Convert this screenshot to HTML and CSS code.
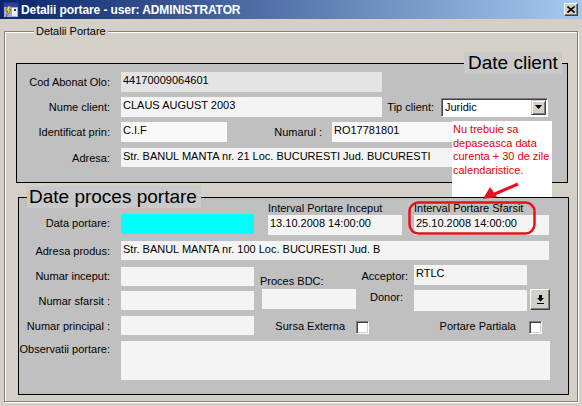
FILE: index.html
```html
<!DOCTYPE html>
<html>

<head>
    <meta charset="UTF-8">
    <title>Detalii portare</title>
    <link rel="stylesheet" href="styles.css">
</head>

<body>
    <div class="titleBar">
        <svg class="appIcon" width="16" height="16" viewBox="0 0 16 16">
            <rect x="0.5" y="0.5" width="15" height="15" fill="#9FA8E0" stroke="#1C2C80"/>
            <rect x="1" y="1" width="14" height="4" fill="#2A3FA8"/>
            <rect x="9" y="6" width="5" height="8" fill="#F0F0F0"/>
            <path d="M11 7h2v2h-2z" fill="#303060"/>
            <path d="M5 4l-2 5h2l-2 6 5-7H6l2-4z" fill="#F8E020" stroke="#705000" stroke-width="0.6"/>
        </svg>
        <span class="titleText">Detalii portare - user: ADMINISTRATOR</span>
        <span class="closeBtn">
            <svg width="8" height="7" viewBox="0 0 8 7">
                <path d="M0.5 0.5L7.5 6.5M7.5 0.5L0.5 6.5" stroke="#000" stroke-width="1.6"/>
            </svg>
        </span>
    </div>

    <div class="groupBox">
        <span class="groupTitle">Detalii Portare</span>

        <!--date client-->
        <div class="panel panelClient">
            <span class="panelTitle titleClient">Date client</span>
            <div class="row">
                <span class="lbl">Cod Abonat Olo:</span>
                <div class="field fieldDim w261">44170009064601</div>
            </div>
            <div class="row">
                <span class="lbl">Nume client:</span>
                <div class="field w261">CLAUS AUGUST 2003</div>
                <span class="lblTip">Tip client:</span>
                <div class="combo">
                    <span class="comboTxt">Juridic</span>
                    <span class="comboBtn">
                        <svg width="7" height="4" viewBox="0 0 7 4"><path d="M0 0h7L3.5 4z" fill="#000"/></svg>
                    </span>
                </div>
            </div>
            <div class="row">
                <span class="lbl">Identificat prin:</span>
                <div class="field fieldWhite w106">C.I.F</div>
                <span class="lblNr">Numarul :</span>
                <div class="field fieldWhite w217">RO17781801</div>
            </div>
            <div class="row rowAddr">
                <span class="lbl">Adresa:</span>
                <div class="field w428">Str. BANUL MANTA nr. 21 Loc. BUCURESTI Jud. BUCURESTI</div>
            </div>
        </div>

        <!--date proces portare-->
        <div class="panel panelProces">
            <span class="panelTitle titleProces">Date proces portare</span>
            <div class="procGrid">
                <span class="gl lData">Data portare:</span>
                <div class="field fData"></div>
                <div class="inc">
                    <span class="cap">Interval Portare Inceput</span>
                    <div class="field">13.10.2008 14:00:00</div>
                </div>
                <div class="out">
                    <span class="cap">Interval Portare Sfarsit</span>
                    <div class="field">25.10.2008 14:00:00</div>
                </div>

                <span class="gl lAdr">Adresa produs:</span>
                <div class="field adr">Str. BANUL MANTA nr. 100 Loc. BUCURESTI Jud. B</div>

                <span class="gl lInc">Numar inceput:</span>
                <div class="field num nInc"></div>
                <span class="lBdc">Proces BDC:</span>
                <span class="lAcc">Acceptor:</span>
                <div class="field acc">RTLC</div>

                <span class="gl lSf">Numar sfarsit :</span>
                <div class="field num nSf"></div>
                <div class="field bdc"></div>
                <span class="lDon">Donor:</span>
                <div class="field don"></div>
                <span class="btn btnDon">
                    <svg width="7" height="9" viewBox="0 0 7 9"><path d="M2 0h3v3h2L3.5 6.5 0 3h2z" fill="#000"/><rect x="0" y="8" width="7" height="1" fill="#000"/></svg>
                </span>

                <span class="gl lPr">Numar principal :</span>
                <div class="field num nPr"></div>
                <span class="lSur">Sursa Externa</span>
                <span class="chk cSur"></span>
                <span class="lPar">Portare Partiala</span>
                <span class="chk cPar"></span>

                <span class="gl lObs">Observatii portare:</span>
                <div class="field obs"></div>
            </div>
        </div>
    </div>

    <!--nota-->
    <div class="note">Nu trebuie sa<br/>depaseasca data<br/>curenta + 30 de zile<br/>calendaristice.</div>
    <svg class="marks" width="582" height="406" viewBox="0 0 582 406">
        <rect x="409.5" y="202.5" width="125" height="31" rx="9" fill="none" stroke="#E8101A" stroke-width="2.5"/>
        <line x1="518" y1="184" x2="490" y2="196" stroke="#E8101A" stroke-width="3"/>
        <polygon points="483,199 497,197 490,187" fill="#E8101A"/>
    </svg>
</body>

</html>
```

FILE: styles.css
```css
body {
    margin: 0;
    width: 582px;
    height: 406px;
    overflow: hidden;
    position: relative;
    background-color: #D4D0C8;
    font-family: "Liberation Sans", Arial, sans-serif;
    font-size: 11px;
    color: #000;
}

/* title bar */
.titleBar {
    display: flex;
    align-items: center;
    height: 19px;
    background: linear-gradient(to right, #0A246A, #A6CAF0);
}

.appIcon {
    flex: none;
    margin-left: 3px;
}

.titleText {
    margin-left: 2px;
    color: #FFF;
    font-weight: bold;
    font-size: 12px;
    letter-spacing: -0.1px;
    white-space: nowrap;
}

.closeBtn {
    display: flex;
    align-items: center;
    justify-content: center;
    box-sizing: border-box;
    width: 14px;
    height: 13px;
    margin-left: auto;
    margin-right: 4px;
    background-color: #D4D0C8;
    border: 1px solid;
    border-color: #FFF #404040 #404040 #FFF;
    box-shadow: inset -1px -1px 0 #808080;
}

/* outer frame */
.groupBox {
    position: relative;
    box-sizing: border-box;
    width: 574px;
    height: 371px;
    margin: 12px 0 0 4px;
    padding: 31px 0 0 11px;
    border: 1px solid #808080;
    box-shadow: 1px 1px 0 #FFF, inset 1px 1px 0 #FFF;
}

.groupTitle {
    position: absolute;
    left: 29px;
    top: -8px;
    padding: 0 2px;
    line-height: 14px;
    background-color: #D4D0C8;
}

.panel {
    position: relative;
    box-sizing: border-box;
    border: 1px solid #000;
    background-color: #C0C0C0;
}

.panelClient {
    width: 552px;
    height: 120px;
    padding-top: 8px;
}

.panelProces {
    width: 551px;
    height: 198px;
    margin: 14px 0 0 2px;
}

.panelTitle {
    position: absolute;
    top: -12px;
    font-size: 19px;
    line-height: 22px;
    white-space: nowrap;
    background-color: #C9C9C9;
}

.titleClient {
    left: 447px;
    padding: 0 4px;
}

.titleProces {
    left: 8px;
    padding: 0 4px 0 2px;
}

/* fields */
.field {
    box-sizing: border-box;
    height: 20px;
    padding: 1px 2px 0;
    line-height: 14px;
    background-color: #F4F4F4;
    white-space: nowrap;
    overflow: hidden;
}

.fieldDim {
    background-color: #E4E4E4;
}

.fieldWhite {
    background-color: #F8F8F8;
}

.w261 { width: 261px; }
.w106 { width: 106px; }
.w217 { width: 217px; }
.w428 { width: 428px; height: 19px; }

/* date client rows */
.row {
    display: flex;
    align-items: center;
    height: 20px;
}

.row + .row {
    margin-top: 5px;
}

.row + .rowAddr {
    height: 19px;
    margin-top: 6px;
}

.lbl {
    box-sizing: border-box;
    width: 94px;
    margin-right: 10px;
    padding-right: 1px;
    text-align: right;
    white-space: nowrap;
    line-height: 14px;
}

.lblTip {
    width: 52px;
    text-align: right;
    white-space: nowrap;
}

.lblNr {
    box-sizing: border-box;
    width: 105px;
    padding-right: 10px;
    text-align: right;
    white-space: nowrap;
}

.combo {
    display: flex;
    align-items: center;
    box-sizing: border-box;
    width: 107px;
    height: 19px;
    margin-left: 7px;
    padding: 1px 1px 1px 2px;
    background-color: #FFF;
    border: 1px solid;
    border-color: #808080 #FFF #FFF #808080;
    box-shadow: inset 1px 1px 0 #404040;
}

.comboTxt {
    flex: 1;
    padding-left: 1px;
}

.comboBtn {
    display: flex;
    align-items: center;
    justify-content: center;
    box-sizing: border-box;
    width: 15px;
    height: 15px;
    background-color: #D4D0C8;
    border: 1px solid;
    border-color: #D4D0C8 #404040 #404040 #D4D0C8;
    box-shadow: inset 1px 1px 0 #FFF, inset -1px -1px 0 #808080;
}

/* date proces portare */
.procGrid {
    display: grid;
    grid-template-columns: 102px 141px 94px 58px 116px 20px;
    grid-template-rows: 35px 27px 24px 25px 25px 42px;
    grid-template-areas:
        "lData fData inc  inc  out  out"
        "lAdr  adr   adr  adr  adr  adr"
        "lInc  nInc  lBdc lAcc acc  ."
        "lSf   nSf   bdc  lDon don  btnDon"
        "lPr   nPr   lSur cSur lPar cPar"
        "lObs  obs   obs  obs  obs  obs";
    padding-top: 4px;
}

.gl {
    align-self: center;
    padding-right: 11px;
    text-align: right;
    line-height: 14px;
    white-space: nowrap;
}

.lData {
    grid-area: lData;
    align-self: start;
    margin-top: 14px;
}

.fData {
    grid-area: fData;
    align-self: start;
    width: 133px;
    margin-top: 12px;
    background-color: #00FFFF;
}

.inc {
    grid-area: inc;
    width: 134px;
    margin-left: 6px;
}

.out {
    grid-area: out;
    width: 135px;
}

.cap {
    display: block;
    line-height: 13px;
    white-space: nowrap;
}

.lAdr { grid-area: lAdr; }

.adr {
    grid-area: adr;
    align-self: center;
    width: 428px;
    height: 19px;
}

.num {
    align-self: center;
    width: 133px;
    height: 19px;
}

.lInc { grid-area: lInc; }
.nInc { grid-area: nInc; }
.lSf { grid-area: lSf; }
.nSf { grid-area: nSf; }
.lPr { grid-area: lPr; }
.nPr { grid-area: nPr; }

.lBdc {
    grid-area: lBdc;
    align-self: end;
    margin-left: -2px;
    line-height: 14px;
    white-space: nowrap;
}

.bdc {
    grid-area: bdc;
    align-self: start;
    width: 94px;
    margin-top: 1px;
}

.lAcc {
    grid-area: lAcc;
    align-self: center;
    padding-right: 6px;
    text-align: right;
    line-height: 14px;
}

.acc {
    grid-area: acc;
    align-self: start;
    width: 113px;
    margin-top: 1px;
}

.lDon {
    grid-area: lDon;
    align-self: start;
    margin-top: 2px;
    padding-right: 11px;
    text-align: right;
    line-height: 14px;
}

.don {
    grid-area: don;
    align-self: start;
    width: 113px;
    height: 21px;
    margin-top: 2px;
}

.btn {
    display: flex;
    align-items: center;
    justify-content: center;
    box-sizing: border-box;
    background-color: #D4D0C8;
    border: 1px solid;
    border-color: #FFF #404040 #404040 #FFF;
    box-shadow: inset -1px -1px 0 #808080;
}

.btnDon {
    grid-area: btnDon;
    align-self: start;
    width: 20px;
    height: 21px;
    margin-top: 1px;
}

.lSur {
    grid-area: lSur;
    align-self: center;
    padding-right: 11px;
    text-align: right;
    line-height: 14px;
    white-space: nowrap;
}

.lPar {
    grid-area: lPar;
    align-self: center;
    padding-right: 14px;
    text-align: right;
    line-height: 14px;
    white-space: nowrap;
}

.chk {
    box-sizing: border-box;
    width: 13px;
    height: 13px;
    align-self: center;
    justify-self: start;
    margin-top: 4px;
    background-color: #FFF;
    border: 1px solid;
    border-color: #808080 #FFF #FFF #808080;
    box-shadow: inset 1px 1px 0 #404040, inset -1px -1px 0 #D4D0C8;
}

.cSur { grid-area: cSur; }

.cPar {
    grid-area: cPar;
    margin-left: -1px;
}

.lObs {
    grid-area: lObs;
    align-self: start;
    margin-top: 4px;
}

.obs {
    grid-area: obs;
    align-self: end;
    height: 39px;
}

/* annotation */
.note {
    position: absolute;
    left: 452px;
    top: 121px;
    box-sizing: border-box;
    width: 100px;
    height: 76px;
    padding: 2px 0 0 1px;
    background-color: #FFF;
    color: #E50000;
    line-height: 13.7px;
    white-space: nowrap;
}

.marks {
    position: absolute;
    left: 0;
    top: 0;
    pointer-events: none;
}
```
